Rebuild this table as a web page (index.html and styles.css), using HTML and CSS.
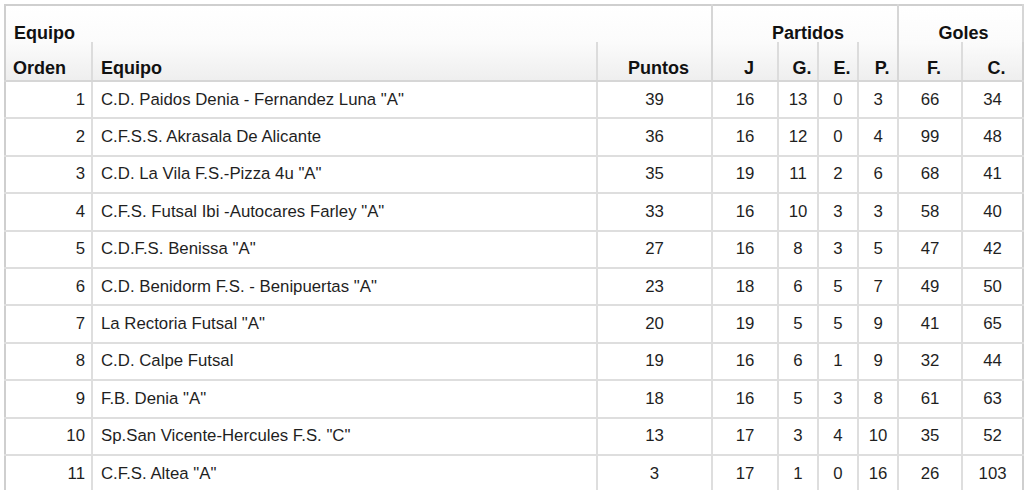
FILE: index.html
```html
<!DOCTYPE html>
<html lang="es">
<head>
<meta charset="utf-8">
<title>Clasificación</title>
<link rel="stylesheet" href="styles.css">
</head>
<body>
<table class="standings">
  <colgroup>
    <col class="c-orden"><col class="c-equipo"><col class="c-puntos">
    <col class="c-j"><col class="c-g"><col class="c-e"><col class="c-p">
    <col class="c-f"><col class="c-c">
  </colgroup>
  <thead>
    <tr class="group-row">
      <th colspan="3" class="grp grp-left">Equipo</th>
      <th colspan="4" class="grp">Partidos</th>
      <th colspan="2" class="grp">Goles</th>
    </tr>
    <tr class="col-row">
      <th class="h-left">Orden</th>
      <th class="h-left h-team">Equipo</th>
      <th>Puntos</th>
      <th class="grp-start">J</th>
      <th>G.</th>
      <th>E.</th>
      <th>P.</th>
      <th class="grp-start">F.</th>
      <th>C.</th>
    </tr>
  </thead>
  <tbody>
    <tr><td class="pos">1</td><td class="team">C.D. Paidos Denia - Fernandez Luna "A"</td><td>39</td><td>16</td><td>13</td><td>0</td><td>3</td><td>66</td><td>34</td></tr>
    <tr><td class="pos">2</td><td class="team">C.F.S.S. Akrasala De Alicante</td><td>36</td><td>16</td><td>12</td><td>0</td><td>4</td><td>99</td><td>48</td></tr>
    <tr><td class="pos">3</td><td class="team">C.D. La Vila F.S.-Pizza 4u "A"</td><td>35</td><td>19</td><td>11</td><td>2</td><td>6</td><td>68</td><td>41</td></tr>
    <tr><td class="pos">4</td><td class="team">C.F.S. Futsal Ibi -Autocares Farley "A"</td><td>33</td><td>16</td><td>10</td><td>3</td><td>3</td><td>58</td><td>40</td></tr>
    <tr><td class="pos">5</td><td class="team">C.D.F.S. Benissa "A"</td><td>27</td><td>16</td><td>8</td><td>3</td><td>5</td><td>47</td><td>42</td></tr>
    <tr><td class="pos">6</td><td class="team">C.D. Benidorm F.S. - Benipuertas "A"</td><td>23</td><td>18</td><td>6</td><td>5</td><td>7</td><td>49</td><td>50</td></tr>
    <tr><td class="pos">7</td><td class="team">La Rectoria Futsal "A"</td><td>20</td><td>19</td><td>5</td><td>5</td><td>9</td><td>41</td><td>65</td></tr>
    <tr><td class="pos">8</td><td class="team">C.D. Calpe Futsal</td><td>19</td><td>16</td><td>6</td><td>1</td><td>9</td><td>32</td><td>44</td></tr>
    <tr><td class="pos">9</td><td class="team">F.B. Denia "A"</td><td>18</td><td>16</td><td>5</td><td>3</td><td>8</td><td>61</td><td>63</td></tr>
    <tr><td class="pos">10</td><td class="team">Sp.San Vicente-Hercules F.S. "C"</td><td>13</td><td>17</td><td>3</td><td>4</td><td>10</td><td>35</td><td>52</td></tr>
    <tr><td class="pos">11</td><td class="team">C.F.S. Altea "A"</td><td>3</td><td>17</td><td>1</td><td>0</td><td>16</td><td>26</td><td>103</td></tr>
  </tbody>
</table>
</body>
</html>
```

FILE: styles.css
```css
html, body {
  margin: 0;
  padding: 0;
  background: #ffffff;
}

body {
  padding: 4px 2px 0 4px;
  font-family: "Liberation Sans", Arial, Helvetica, sans-serif;
  overflow: hidden;
}

.standings {
  border-collapse: collapse;
  table-layout: fixed;
  width: 1018px;
  border: 2px solid #cfcfcf;
  color: #1f1f1f;
}

.c-orden { width: 87px; }
.c-equipo { width: 505px; }
.c-puntos { width: 115px; }
.c-j { width: 66px; }
.c-g { width: 40px; }
.c-e { width: 40px; }
.c-p { width: 40px; }
.c-f { width: 64px; }
.c-c { width: 61px; }

thead {
  background: linear-gradient(#ffffff 0%, #fbfbfb 50%, #eeeeee 100%);
}

th {
  font-weight: bold;
  font-size: 18px;
  color: #111111;
  padding: 0;
  text-align: center;
}

.group-row th {
  height: 36px;
  line-height: 17px;
  vertical-align: bottom;
  padding-bottom: 0;
  border-left: 2px solid #d6d6d6;
  border-right: 2px solid #d6d6d6;
}

.group-row .grp-left {
  text-align: left;
  padding-left: 8px;
  border-left: none;
}

.group-row .grp:not(.grp-left) {
  padding-left: 6px;
}

.col-row th {
  height: 37px;
  vertical-align: bottom;
  padding-bottom: 1px;
  border-left: 2px solid #dcdcdc;
  border-bottom: 2px solid #d6d6d6;
  padding-left: 8px;
}

.col-row th:first-child {
  border-left: none;
  padding-left: 7px;
}

.col-row .h-left {
  text-align: left;
}

.col-row .grp-start {
  border-left: 2px solid #d6d6d6;
}

td {
  height: 35.4px;
  padding: 0;
  font-size: 16.8px;
  text-align: center;
  vertical-align: middle;
  border: 2px solid #dedede;
}

tbody tr:first-child td {
  border-top: none;
}

td:first-child {
  border-left: none;
}

td:last-child {
  border-right: none;
}

td.pos {
  text-align: right;
  padding-right: 6px;
}

td.team {
  text-align: left;
  padding-left: 8px;
  white-space: nowrap;
}
```
